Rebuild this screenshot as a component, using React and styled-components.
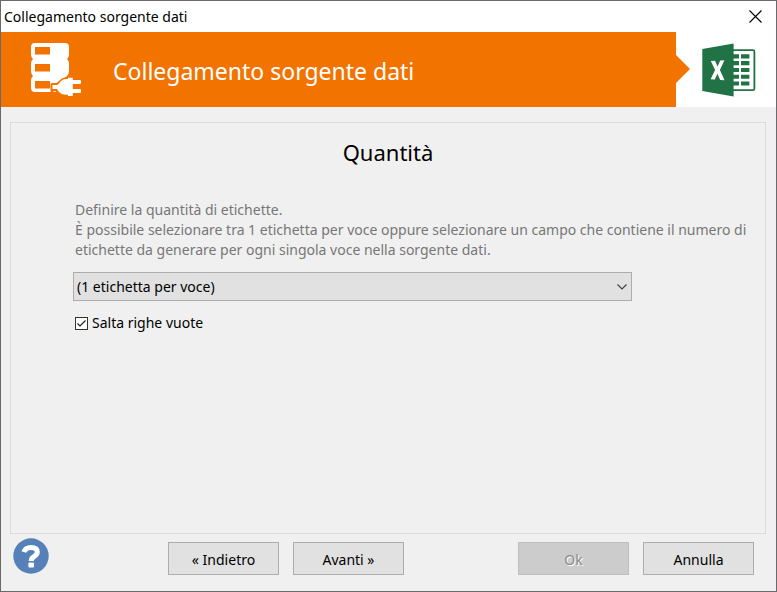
import React, { useState } from "react";
import styled, { createGlobalStyle } from "styled-components";

const DatabasePlugIcon = () => (
	<svg width="52" height="55" viewBox="0 0 52 55" aria-hidden="true">
		<path
			d="M5 1H35Q39 1 39 5V13Q39 15 37 17Q39 19 39 21V29Q39 32 37 34L33 37L28 42V48L25 50H5Q1 50 1 46V38Q1 36 3 34Q1 32 1 29V21Q1 19 3 17Q1 15 1 13V5Q1 1 5 1Z"
			fill="#fff"
		/>
		<path d="M5 5H20V12.5H5ZM5 22H20V29.5H5ZM5 39H20V46.5H5Z" fill="#f27300" />
		<path
			d="M22 42.4H27.5L31 39Q33 37 36 37H38V35.8H42.8V54H38V52.8H35Q31 52.5 28.5 49.5L27 47.6H24.5Q23 47.6 22 49Z"
			fill="#fff"
			stroke="#f27300"
			strokeWidth="3"
			strokeLinejoin="round"
		/>
		<path
			d="M22.5 43H27.5L31 39Q33 37 36 37H38V35.8H42.8V54H38V52.8H35Q31 52.5 28.5 49.5L27 47H22.5Z"
			fill="#fff"
		/>
		<path d="M42 38H50Q51 38 51 39V41Q51 42 50 42H42ZM42 47H50Q51 47 51 48V50Q51 51 50 51H42Z" fill="#fff" />
	</svg>
);

const ExcelIcon = () => (
	<svg width="54" height="54" viewBox="0 0 54 54" role="img" aria-label="Excel">
		<rect x="28" y="7.2" width="24.4" height="40" rx="1.5" fill="#fff" stroke="#217346" strokeWidth="1.8" />
		<path
			d="M31 11.2H37V15.4H31ZM39 11.2H47.4V15.4H39ZM31 18H37V22.2H31ZM39 18H47.4V22.2H39ZM31 25H37V29H31ZM39 25H47.4V29H39ZM31 31.8H37V35.8H31ZM39 31.8H47.4V35.8H39ZM31 38.5H37V42.5H31ZM39 38.5H47.4V42.5H39Z"
			fill="#217346"
		/>
		<path d="M0.3 6L31.6 0.4V53.5L0.3 48Z" fill="#217346" />
		<path
			d="M8.8 18L13 17.7L15.6 23.6L18.2 17.4L22.4 17.2L17.9 27L22.6 37.3L18.2 37L15.4 30.7L12.8 36.6L8.6 36.3L13.1 27Z"
			fill="#fff"
		/>
	</svg>
);

const App = () => {
	const [skipEmpty, setSkipEmpty] = useState(true);

	return (
		<Window>
			<GlobalStyle />
			<TitleBar>
				<span>Collegamento sorgente dati</span>
				<CloseButton type="button" aria-label="Chiudi">
					<svg width="13" height="13" viewBox="0 0 13 13">
						<path d="M0.5 0.5L12.5 12.5M12.5 0.5L0.5 12.5" stroke="#000" strokeWidth="1.1" />
					</svg>
				</CloseButton>
			</TitleBar>
			<Banner>
				<BannerMain>
					<DatabasePlugIcon />
					<BannerTitle>Collegamento sorgente dati</BannerTitle>
				</BannerMain>
				<BannerSource>
					<Arrow width="14" height="28" viewBox="0 0 14 28" aria-hidden="true">
						<path d="M0 0L14 14L0 28Z" fill="#f27300" />
					</Arrow>
					<ExcelIcon />
				</BannerSource>
			</Banner>
			<Panel>
				<Heading>Quantità</Heading>
				<Form>
					<Description>
						Definire la quantità di etichette.
						<br />È possibile selezionare tra 1 etichetta per voce oppure selezionare un campo che
						contiene il numero di etichette da generare per ogni singola voce nella sorgente dati.
					</Description>
					<SelectBox>
						<Select aria-label="Quantità">
							<option>(1 etichetta per voce)</option>
						</Select>
						<Chevron width="10" height="6" viewBox="0 0 10 6" aria-hidden="true">
							<path d="M0.5 0.5L5 5L9.5 0.5" fill="none" stroke="#404040" strokeWidth="1.2" />
						</Chevron>
					</SelectBox>
					<CheckLabel>
						<Checkbox
							type="checkbox"
							checked={skipEmpty}
							onChange={(e) => setSkipEmpty(e.target.checked)}
						/>
						Salta righe vuote
					</CheckLabel>
				</Form>
			</Panel>
			<Footer>
				<HelpButton type="button" aria-label="Aiuto">
					<svg width="36" height="36" viewBox="0 0 36 36">
						<circle cx="18" cy="18" r="17.7" fill="#5580b8" />
						<path
							d="M10.8 14Q12.5 9.4 18 9.4Q24.3 9.4 24.3 14Q24.3 16.5 21.5 18.2Q18.2 20 18.2 23"
							fill="none"
							stroke="#fff"
							strokeWidth="5"
						/>
						<rect x="15.4" y="24.4" width="5.6" height="5" rx="1" fill="#fff" />
					</svg>
				</HelpButton>
				<ButtonGroup>
					<Button type="button">« Indietro</Button>
					<Button type="button">Avanti »</Button>
				</ButtonGroup>
				<ButtonGroup $end>
					<Button type="button" disabled>
						Ok
					</Button>
					<Button type="button">Annulla</Button>
				</ButtonGroup>
			</Footer>
		</Window>
	);
};

export default App;

const GlobalStyle = createGlobalStyle`
	* {
		box-sizing: border-box;
	}
	body {
		margin: 0;
		font-family: "Noto Sans", "Open Sans", sans-serif;
		font-size: 14px;
		line-height: 20px;
		color: #000;
	}
	button, select, input {
		font: inherit;
		color: inherit;
		margin: 0;
	}
`;

const Window = styled.div`
	display: flex;
	flex-direction: column;
	min-height: 100vh;
	border: 1px solid #6b696b;
	background: #f0f0f0;
`;

const TitleBar = styled.header`
	display: flex;
	justify-content: space-between;
	align-items: center;
	height: 31px;
	padding-left: 3px;
	background: #fff;
`;

const CloseButton = styled.button`
	display: flex;
	align-items: center;
	justify-content: center;
	width: 42px;
	height: 30px;
	padding: 0;
	border: none;
	background: none;
`;

const Banner = styled.div`
	display: flex;
	height: 75px;
`;

const BannerMain = styled.div`
	flex: 1;
	display: flex;
	align-items: center;
	gap: 31px;
	padding-left: 29px;
	background: #f27300;
`;

const BannerTitle = styled.h1`
	margin: 0;
	padding-top: 2px;
	font-size: 23px;
	line-height: 30px;
	font-weight: 400;
	color: #fff;
`;

const BannerSource = styled.div`
	position: relative;
	display: flex;
	align-items: center;
	width: 100px;
	padding-left: 26px;
	background: #fff;
`;

const Arrow = styled.svg`
	position: absolute;
	left: 0;
	top: 23px;
`;

const Panel = styled.main`
	flex: 1;
	margin: 15px 10px 0 9px;
	border: 1px solid #dcdcdc;
`;

const Heading = styled.h2`
	margin: 14px 0 0;
	font-size: 22px;
	line-height: 30px;
	font-weight: 400;
	text-align: center;
`;

const Form = styled.div`
	padding: 33px 8px 0 62px;
`;

const Description = styled.p`
	margin: 0;
	padding-left: 2px;
	color: #777;
`;

const SelectBox = styled.div`
	position: relative;
	margin: 12px 125px 0 0;
`;

const Select = styled.select`
	display: block;
	width: 100%;
	height: 29px;
	padding: 0 3px;
	border: 1px solid #adadad;
	border-radius: 0;
	background: #e1e1e1;
	appearance: none;
`;

const Chevron = styled.svg`
	position: absolute;
	right: 5px;
	top: 12px;
	pointer-events: none;
`;

const CheckLabel = styled.label`
	display: inline-flex;
	align-items: center;
	gap: 4px;
	margin-top: 12px;
	padding-left: 2px;
`;

const Checkbox = styled.input`
	appearance: none;
	width: 13px;
	height: 13px;
	border: 1px solid #333;
	background: #fff;
	&:checked {
		background: #fff
			url("data:image/svg+xml,%3Csvg xmlns='http://www.w3.org/2000/svg' viewBox='0 0 11 11'%3E%3Cpath d='M1.5 5.5L4 8L9.5 2.5' fill='none' stroke='%23222' stroke-width='1.2'/%3E%3C/svg%3E");
	}
`;

const Footer = styled.footer`
	display: flex;
	align-items: flex-start;
	height: 57px;
	padding: 4px 22px 0 12px;
`;

const HelpButton = styled.button`
	display: flex;
	padding: 0;
	border: none;
	background: none;
`;

const ButtonGroup = styled.div`
	display: flex;
	gap: 14px;
	margin-top: 4px;
	margin-left: ${({ $end }) => ($end ? "auto" : "119px")};
`;

const Button = styled.button`
	width: 111px;
	height: 33px;
	padding: 2px 0 0;
	border: 1px solid #adadad;
	background: #e1e1e1;
	&:disabled {
		border-color: #bfbfbf;
		background: #ccc;
		color: #8b8b8b;
		text-shadow: 1px 1px 0 #fff;
	}
`;
